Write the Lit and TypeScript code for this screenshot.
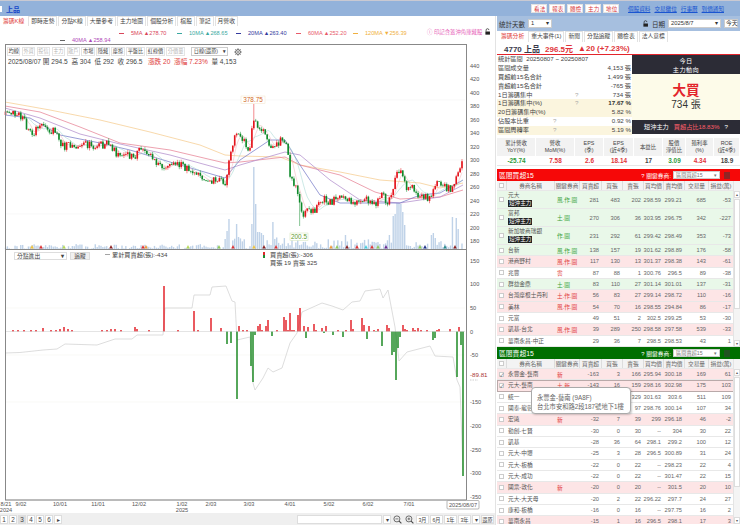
import { LitElement, html, svg, css } from 'lit';
import { customElement, property } from 'lit/decorators.js';

type Pt = [number, number];

// price path read off the chart, screen coords
const PRICE: Pt[] = [[5, 115], [13, 113], [23, 116], [27, 128], [33, 133], [41, 125], [50, 130], [56, 131], [60, 146], [75, 146], [80, 143], [90, 145], [100, 146], [107, 143], [118, 155], [125, 153], [135, 157], [140, 150], [150, 152], [157, 165], [165, 165], [180, 165], [192, 170], [200, 175], [212, 180], [224, 181], [226, 188], [228, 160], [232, 146], [238, 131], [243, 140], [247, 146], [250, 150], [253, 118], [258, 125], [265, 135], [272, 150], [280, 140], [287, 148], [290, 175], [296, 190], [302, 217], [307, 207], [315, 212], [323, 198], [330, 202], [345, 197], [352, 205], [367, 200], [377, 203], [383, 193], [388, 205], [395, 180], [400, 168], [403, 180], [407, 190], [413, 188], [418, 197], [430, 197], [437, 182], [447, 188], [453, 190], [457, 173], [460, 170], [462, 163]];

const MA120: Pt[] = [[5, 102], [50, 110], [100, 120], [150, 132], [200, 145], [225, 155], [240, 156], [280, 157], [300, 165], [340, 172], [380, 180], [420, 183], [440, 188], [463, 183]];
const MA60: Pt[] = [[5, 106], [40, 112], [80, 127], [120, 143], [170, 150], [225, 163], [240, 162], [285, 157], [300, 165], [340, 175], [375, 192], [400, 199], [440, 197], [463, 190]];
const MA40: Pt[] = [[5, 108], [40, 118], [80, 134], [120, 144], [170, 155], [225, 170], [240, 165], [285, 152], [300, 155], [330, 180], [360, 200], [400, 203], [440, 197], [463, 185]];
const MA20: Pt[] = [[5, 115], [30, 118], [60, 135], [100, 143], [130, 150], [170, 162], [225, 178], [240, 160], [270, 140], [285, 140], [300, 165], [320, 195], [340, 203], [400, 203], [420, 195], [440, 193], [463, 180]];

const NET_LINE: Pt[] = [[5, 353], [20, 352.5], [43, 350], [57, 349], [65, 344], [97, 345], [115, 339], [132, 339], [137, 335], [163, 335], [165, 308], [192, 308], [194, 295], [210, 295], [212, 287], [226, 286], [232, 301], [235, 302], [237, 340], [250, 337], [253, 383], [255, 390], [263, 378], [268, 368], [273, 372], [282, 368], [290, 343], [297, 333], [302, 312], [322, 303], [332, 306], [343, 310], [352, 302], [360, 301], [365, 291], [380, 289], [383, 298], [388, 290], [395, 327], [399, 361], [407, 352], [430, 346], [435, 356], [453, 357], [457, 380], [460, 387], [463, 470]];

// x, top of bar
const NET_BARS: Pt[] = [[13, 330], [18, 330], [24, 330], [31, 330], [36, 330], [43, 328], [51, 330], [56, 330], [60, 329], [64, 327], [68, 329], [72, 330], [102, 330], [107, 330], [111, 329], [115, 329], [121, 330], [135, 327], [137, 329], [149, 330], [164, 286], [178, 330], [194, 311], [198, 330], [211, 318], [221, 328], [227, 344], [231, 343], [237, 399], [239, 326], [243, 330], [247, 330], [251, 366], [253, 382], [255, 335], [258, 326], [260, 324], [262, 330], [266, 326], [268, 320], [272, 336], [277, 330], [284, 317], [286, 320], [288, 330], [290, 313], [292, 330], [294, 330], [298, 315], [300, 308], [304, 326], [306, 338], [308, 327], [314, 324], [316, 330], [322, 328], [324, 333], [326, 326], [333, 335], [338, 330], [343, 337], [346, 330], [351, 320], [353, 329], [362, 318], [364, 325], [367, 339], [369, 326], [374, 330], [376, 332], [378, 329], [382, 346], [387, 325], [389, 328], [392, 355], [394, 352], [396, 380], [398, 348], [400, 337], [403, 325], [405, 329], [407, 330], [413, 328], [415, 330], [418, 328], [421, 330], [427, 330], [433, 340], [435, 338], [437, 330], [439, 329], [450, 329], [457, 377], [459, 327], [461, 345], [463, 476]];

const VOL_SPIKES: Pt[] = [[226, 10], [227, 18], [229, 30], [237, 25], [238, 12], [251, 25], [253, 82], [255, 45], [257, 17], [259, 17], [261, 16], [263, 14], [272, 27], [345, 14], [390, 14], [394, 33], [396, 35], [398, 46], [400, 45], [402, 37], [404, 24], [431, 14], [433, 16], [436, 11], [453, 32], [456, 31], [458, 20], [463, 43]];

const MARKERS: [number, string][] = [[32, '#f2c33c'], [41, '#d33'], [64, '#b7d95a'], [111, '#8c2020'], [143, '#d33'], [146, '#ef9a3c'], [188, '#b7d95a'], [219, '#8fc85a'], [233, '#d33'], [254, '#f2c33c'], [264, '#8c2020'], [276, '#d33'], [331, '#ef9a3c'], [337, '#8fc85a'], [347, '#8c2020'], [357, '#d33'], [366, '#44ccdd'], [372, '#d33'], [378, '#8fc85a'], [386, '#6a2c91'], [420, '#8fc85a'], [425, '#223388'], [445, '#2a8a8a'], [455, '#8c2020']];

const DATES: [number, string, string?][] = [[6, '8/21', '2024'], [21, '9/02'], [60, '10/01'], [98, '11/01'], [139, '12/02'], [182, '1/02', '2025'], [211, '2/03'], [249, '3/03'], [290, '4/01'], [329, '5/02'], [368, '6/02'], [409, '7/01']];

function interp(keys: Pt[], x: number) {
  for (let i = 1; i < keys.length; i++) {
    if (x <= keys[i][0]) {
      const [x0, y0] = keys[i - 1];
      const [x1, y1] = keys[i];
      return y0 + ((y1 - y0) * (x - x0)) / (x1 - x0);
    }
  }
  return keys[keys.length - 1][1];
}

function seeded(seed: number) {
  return () => {
    seed = (seed * 1664525 + 1013904223) % 4294967296;
    return seed / 4294967296;
  };
}

function toPath(pts: Pt[]) {
  return 'M' + pts.map((p) => `${p[0].toFixed(1)} ${p[1].toFixed(1)}`).join('L');
}

@customElement('kline-chart')
export class KlineChart extends LitElement {
  static styles = css`
    :host {
      display: block;
    }
    svg {
      display: block;
      width: 495px;
      height: 448px;
      overflow: visible;
    }
    text {
      font-family: "Liberation Sans", "Noto Sans CJK TC", sans-serif;
      font-size: 5.6px;
      fill: #555;
    }
    .label {
      font-size: 6.2px;
      fill: #444;
    }
    .peak {
      font-size: 6.4px;
      fill: #d2691e;
    }
    .low {
      font-size: 6.4px;
      fill: #5c9a2c;
    }
    .cross {
      font-size: 6.2px;
      fill: #a33;
    }
  `;

  private series() {
    const rand = seeded(4770);
    const out: { x: number; o: number; c: number; h: number; l: number }[] = [];
    let prev = 115;
    for (let i = 0; i < 240; i++) {
      const x = 5.5 + i * 1.91;
      const c = interp(PRICE, x) + (rand() - 0.5) * 8;
      let h = Math.min(prev, c) - rand() * 2.5;
      let l = Math.max(prev, c) + rand() * 2.5;
      // long wicks at the 378.75 high and the 200.5 low
      if (Math.abs(x - 253) < 1) h = 104;
      if (Math.abs(x - 299) < 1) l = 226;
      out.push({ x, o: prev, c, h, l });
      prev = c;
    }
    return out;
  }

  private candles(data: ReturnType<KlineChart['series']>) {
    return data.map((d) => {
      const up = d.c < d.o;
      const color = up ? '#e4141c' : '#0f8a2a';
      return svg`
        <line x1=${d.x} x2=${d.x} y1=${d.h} y2=${d.l} stroke=${color} stroke-width="0.5"></line>
        <rect x=${d.x - 0.8} y=${Math.min(d.o, d.c)} width="1.6" height=${Math.max(Math.abs(d.o - d.c), 0.7)} fill=${color}></rect>
      `;
    });
  }

  private volumes(data: ReturnType<KlineChart['series']>) {
    const rand = seeded(91);
    return data.map((d) => {
      const spike = VOL_SPIKES.find((s) => Math.abs(s[0] - d.x) < 1);
      const scale = d.x < 222 ? 5 : d.x < 300 ? 12 : d.x < 390 ? 10 : 8;
      const h = spike ? spike[1] : rand() * scale;
      return svg`<rect x=${d.x - 0.7} y=${249 - h} width="1.4" height=${h} fill="#bfd2e8"></rect>`;
    });
  }

  private movingAvg(data: ReturnType<KlineChart['series']>, n: number): Pt[] {
    return data.map((d, i) => {
      const from = Math.max(0, i - n + 1);
      const part = data.slice(from, i + 1);
      return [d.x, part.reduce((s, p) => s + p.c, 0) / part.length] as Pt;
    });
  }

  render() {
    const data = this.series();
    const priceTicks = [440, 420, 400, 380, 360, 340, 320, 300, 280, 260, 240, 220, 200, 180];
    const netTicks = [100, 50, 0, -50, -150, -200, -250, -300, -350];
    return html`
      <svg viewBox="0 65 495 448">
        ${[100, 160, 214].map((y) => svg`<line x1="6" x2="465" y1=${y} y2=${y} stroke="#f3f3f3" stroke-width="0.6"></line>`)}
        ${[308, 355, 402].map((y) => svg`<line x1="6" x2="465" y1=${y} y2=${y} stroke="#f5f5f0" stroke-width="0.6"></line>`)}

        ${this.volumes(data)}
        ${MARKERS.map(([x, c]) => svg`<polygon points="${x - 1.8},248.5 ${x + 1.8},248.5 ${x},245" fill=${c}></polygon>`)}

        <path d=${toPath(MA120)} fill="none" stroke="#f6cf97" stroke-width="0.8"></path>
        <path d=${toPath(MA60)} fill="none" stroke="#e98a9c" stroke-width="0.8"></path>
        <path d=${toPath(MA40)} fill="none" stroke="#b694cf" stroke-width="0.8"></path>
        <path d=${toPath(MA20)} fill="none" stroke="#6f73c4" stroke-width="0.7"></path>
        <path d=${toPath(this.movingAvg(data, 10))} fill="none" stroke="#9ad3cc" stroke-width="0.5"></path>
        <path d=${toPath(this.movingAvg(data, 5))} fill="none" stroke="#eeb0b4" stroke-width="0.5"></path>
        ${this.candles(data)}

        <rect x="241" y="96" width="24" height="7.5" fill="#fff" stroke="#f3e2c8" stroke-width="0.5"></rect>
        <text class="peak" x="253" y="102" text-anchor="middle">378.75</text>
        <rect x="290" y="233" width="18" height="7.5" fill="#fff" stroke="#cfe3b5" stroke-width="0.5"></rect>
        <text class="low" x="299" y="239" text-anchor="middle">200.5</text>

        <line x1="5" x2="466" y1="249.5" y2="249.5" stroke="#888" stroke-width="1"></line>

        <path d=${toPath(NET_LINE)} fill="none" stroke="#d4d4d4" stroke-width="0.8"></path>
        ${NET_BARS.map(([x, top]) => {
          const up = top < 331.5;
          return svg`<rect x=${x - 0.75} y=${up ? top : 331.5} width="1.5" height=${Math.abs(top - 331.5)} fill=${up ? '#e4242c' : '#1f8a26'}></rect>`;
        })}
        <line x1="6" x2="465" y1="331.5" y2="331.5" stroke="#bbb" stroke-width="0.4"></line>

        <line x1="105" x2="110" y1="254.5" y2="254.5" stroke="#666" stroke-width="0.6"></line>
        <text class="label" x="112" y="256.5">累計買賣超(張):-434</text>
        <rect x="263" y="252" width="2" height="3" fill="#e0282c"></rect>
        <rect x="263" y="255" width="2" height="3" fill="#1d8a30"></rect>
        <text class="label" x="270" y="256.5">買賣超(張):-306</text>
        <text class="label" x="270" y="264.5">買張 19 賣張 325</text>

        ${priceTicks.map((p) => svg`<text x="470" y=${66 + (440 - p) * 0.6735 + 2}>${p}</text>`)}
        <text x="470" y="262.5">150</text>
        ${netTicks.map((v) => svg`<text x="470" y=${331.5 - v * 0.472 + 2}>${v}</text>`)}
        <text class="cross" x="470" y="377">-89.81</text>
        <line x1="470" x2="478" y1="380" y2="380" stroke="#999" stroke-width="0.5" stroke-dasharray="1.5 1"></line>

        <line x1="5" x2="466" y1="500" y2="500" stroke="#777" stroke-width="1"></line>
        ${DATES.map(([x, d, year]) => svg`
          <text x=${x} y="505.5" text-anchor="middle">${d}</text>
          ${year ? svg`<text x=${x} y="511.5" text-anchor="middle">${year}</text>` : ''}
        `)}
        <rect x="447" y="500.5" width="32" height="8.5" rx="1" fill="#fff" stroke="#888" stroke-width="0.6"></rect>
        <text x="463" y="507" text-anchor="middle">2025/08/07</text>
      </svg>
    `;
  }
}

type Row = {
  name: string;
  badge?: boolean;
  tag?: string;
  tone?: 'g' | 'p' | '';
  nums: (number | string)[];
  checked?: boolean;
};

@customElement('broker-table')
export class BrokerTable extends LitElement {
  @property({ attribute: false }) rows: Row[] = [];
  @property({ type: Number }) selected = -1;

  static styles = css`
    :host {
      display: block;
      position: relative;
      overflow: hidden;
      font-family: "Liberation Sans", "Noto Sans CJK TC", sans-serif;
      font-size: 5.7px;
      color: #666;
    }
    .row {
      display: grid;
      grid-template-columns: 9px 48px 25px 22px 21px 21px 20px 21px 24px 25px;
      border-bottom: 1px solid #e8e8e8;
      min-height: 11.33px;
      align-items: center;
      box-sizing: border-box;
    }
    .head {
      background: #f3f3f3;
      min-height: 10px;
      text-align: center;
    }
    .head > span {
      border-left: 1px solid #ddd;
    }
    .g {
      background: #e9f8e9;
    }
    .p {
      background: #fde5e6;
    }
    .sel {
      outline: 1px solid #b9a9a9;
      outline-offset: -1px;
    }
    .cell-name {
      padding-left: 2px;
      line-height: 8.5px;
      color: #555;
      white-space: nowrap;
    }
    .num {
      text-align: right;
      padding-right: 2px;
    }
    .badge {
      display: block;
      width: max-content;
      background: #222;
      color: #fff;
      padding: 0 1px;
      font-size: 5.6px;
      line-height: 7.5px;
      margin-bottom: 1px;
    }
    .tag {
      padding-left: 3px;
      color: #e03a3a;
    }
    .tag.g-tag {
      color: #3aa23a;
    }
    .box {
      width: 5px;
      height: 5px;
      margin-left: 2px;
      border: 1px solid #ccc;
      background: #fff;
      box-sizing: border-box;
      font-size: 5px;
      line-height: 4px;
      color: #444;
    }
    .scroll {
      position: absolute;
      top: 0;
      right: 0;
      bottom: 0;
      width: 6px;
      background: #f4f4f4;
      border-left: 1px solid #e4e4e4;
    }
    .scroll::before {
      content: '';
      position: absolute;
      left: 0;
      right: 0;
      top: 18px;
      height: 110px;
      background: #fff;
      border: 1px solid #ddd;
      box-sizing: border-box;
    }
    .arrow {
      position: absolute;
      left: 0;
      right: 0;
      height: 7px;
      background: #fff;
      border: 1px solid #ddd;
      box-sizing: border-box;
      font-size: 4px;
      line-height: 5px;
      text-align: center;
      color: #555;
    }
    .arrow.up {
      top: 10px;
    }
    .arrow.down {
      bottom: 0;
    }
  `;

  render() {
    const heads = ['券商名稱', '關鍵券商', '買賣超', '買張', '賣張', '買均價', '賣均價', '交易量', '損益(萬)'];
    return html`
      <div class="row head">
        <div class="box"></div>
        ${heads.map((h) => html`<span>${h}</span>`)}
      </div>
      ${this.rows.map(
        (r, i) => html`
          <div class="row ${r.tone ?? ''} ${i === this.selected ? 'sel' : ''}">
            <div class="box">${r.checked ? '✓' : ''}</div>
            <div class="cell-name">
              ${r.name}${r.badge ? html`<span class="badge">短沖主力</span>` : ''}
            </div>
            <div class="tag ${r.tone === 'g' ? 'g-tag' : ''}">${r.tag ?? ''}</div>
            ${r.nums.map((n) => html`<div class="num">${n}</div>`)}
          </div>
        `
      )}
      <div class="scroll">
        <div class="arrow up">▴</div>
        <div class="arrow down">▾</div>
      </div>
    `;
  }
}

const BUY_ROWS: Row[] = [
  { name: '元大', badge: true, tag: '風.作.圖', tone: 'g', nums: [281, 483, 202, 298.59, 299.21, 685, -53] },
  { name: '富邦', badge: true, tag: '土.圖', tone: 'g', nums: [270, 306, 36, 303.95, 296.75, 342, -227] },
  { name: '新加坡商瑞銀', badge: true, tag: '作.圖', tone: 'g', nums: [231, 292, 61, 299.42, 298.49, 353, -73] },
  { name: '台新', tag: '風.作.圖', tone: 'g', nums: [138, 157, 19, 301.62, 298.89, 176, -58] },
  { name: '港商野村', tag: '風.作.圖', tone: 'p', nums: [117, 130, 13, 301.37, 298.38, 143, -61] },
  { name: '兆豐', tag: '雲', tone: '', nums: [87, 88, 1, 300.76, 296.5, 89, -38] },
  { name: '群益金鼎', tag: '土.圖', tone: 'g', nums: [83, 110, 27, 301.14, 301.01, 137, -31] },
  { name: '台灣摩根士丹利', tag: '土.作.圖', tone: 'p', nums: [56, 83, 27, 299.14, 298.72, 110, -16] },
  { name: '美林', tag: '風.作.圖', tone: 'p', nums: [54, 70, 16, 298.55, 294.84, 86, -17] },
  { name: '元富', tone: '', nums: [49, 51, 2, 302.5, 299.25, 53, -30] },
  { name: '凱基-台北', tag: '風.作.圖', tone: 'p', nums: [39, 289, 250, 298.58, 297.58, 539, -33] },
  { name: '華南永昌-中正', tone: '', nums: [29, 36, 7, 298.5, 298.53, 43, 1] },
];

const SELL_ROWS: Row[] = [
  { name: '永豐金-藝南', tag: '新', tone: 'p', checked: true, nums: [-163, 3, 166, 295.94, 300.18, 169, 61] },
  { name: '元大-藝南', tag: '土.新', tone: 'p', checked: true, nums: [-143, 16, 159, 298.16, 302.98, 175, 103] },
  { name: '統一', tone: '', nums: [-147, 182, 329, 301.63, 303.6, 511, 109] },
  { name: '國泰-龍彰', tone: '', nums: [-87, 10, 97, 298.76, 300.14, 107, 34] },
  { name: '宏遠', tag: '新', tone: 'p', nums: [-32, 7, 39, 299, 296.18, 46, -2] },
  { name: '勤創-七賢', tone: '', nums: [-30, 0, 30, '--', 304, 30, 22] },
  { name: '凱基', tone: '', nums: [-28, 36, 64, 298.1, 299.2, 100, 12] },
  { name: '元大-中壢', tone: '', nums: [-25, 3, 28, 296.5, 300.89, 31, 24] },
  { name: '元大-板橋', tone: '', nums: [-22, 0, 22, '--', 298.23, 22, 4] },
  { name: '元大-成功', tone: '', nums: [-22, 0, 22, '--', 301.47, 22, 15] },
  { name: '國票-敦化', tag: '新', tone: 'p', nums: [-20, 0, 20, '--', 301.5, 20, 10] },
  { name: '元大-大天母', tone: '', nums: [-20, 2, 22, 296.22, 297.7, 24, 27] },
  { name: '康和-板橋', tone: '', nums: [-16, 0, 16, '--', 297.75, 16, 2] },
  { name: '華南永昌', tone: 'p', nums: [-15, 1, 16, 296.5, 298.1, 17, 3] },
];

const STATS: { k: string; q?: number; v: string; hi?: boolean; bold?: boolean }[] = [
  { k: '區間成交量', v: '4,153 張' },
  { k: '買超前15名合計', v: '1,499 張' },
  { k: '賣超前15名合計', v: '-765 張' },
  { k: '1日籌碼集中', q: 78, v: '734 張' },
  { k: '1日籌碼集中(%)', q: 78, v: '17.67 %', hi: true, bold: true },
  { k: '20日籌碼集中(%)', v: '5.82 %', hi: true },
  { k: '佔股本比重', q: 56, v: '0.92 %' },
  { k: '區間周轉率', q: 56, v: '5.19 %', hi: true },
];

const METRICS: { k: string[]; v: string; c: string }[] = [
  { k: ['累計營收', 'YoY(%)'], v: '-25.74', c: 'up-g' },
  { k: ['營收', 'MoM(%)'], v: '7.58', c: 'up-r' },
  { k: ['EPS', '(季)'], v: '2.6', c: 'up-r' },
  { k: ['EPS', '(近4季)'], v: '18.14', c: 'up-r' },
  { k: ['本益比'], v: '17', c: '' },
  { k: ['股價', '淨值比'], v: '3.09', c: 'up-g' },
  { k: ['殖利率', '(%)'], v: '4.34', c: 'up-r' },
  { k: ['ROE', '(近4季)'], v: '18.9', c: '' },
];

const lockIcon = svg`<svg class="lock" viewBox="0 0 10 10"><path d="M3 5V3a2 2 0 0 1 4 0" fill="none" stroke="#222" stroke-width="1"></path><rect x="2" y="5" width="6.5" height="4.5" fill="#222"></rect></svg>`;

const gearIcon = svg`<svg class="gear" viewBox="0 0 12 12"><circle cx="6" cy="6" r="3.6" fill="none" stroke="#333" stroke-width="1.1"></circle><circle cx="6" cy="6" r="1.3" fill="none" stroke="#333" stroke-width="0.7"></circle><path d="M6 .6v1.6M6 9.8v1.6M.6 6h1.6M9.8 6h1.6M2.2 2.2l1.1 1.1M8.7 8.7l1.1 1.1M9.8 2.2 8.7 3.3M3.3 8.7 2.2 9.8" stroke="#333" stroke-width="1.2"></path></svg>`;

const zoomIcon = (plus: boolean) => svg`<svg class="zoom" viewBox="0 0 12 12"><circle cx="5.2" cy="5.2" r="4" fill="none" stroke="#444" stroke-width="1"></circle><path d="M8.2 8.2 11.2 11.2" stroke="#444" stroke-width="1.4"></path><path d=${plus ? 'M3.4 5.2h3.6M5.2 3.4v3.6' : 'M3.2 5.2h4'} stroke="#444" stroke-width="0.9"></path></svg>`;

@customElement('app-root')
export class AppRoot extends LitElement {
  static styles = css`
    :host {
      display: block;
      width: 740px;
      height: 525px;
      overflow: hidden;
      background: #fff;
      font-family: "Liberation Sans", "Noto Sans CJK TC", sans-serif;
      font-size: 6.2px;
      color: #444;
    }
    * {
      box-sizing: border-box;
    }
    .topbar {
      height: 16px;
      border-top: 1px solid #c9c9d2;
      background: #93b2da;
      display: flex;
      align-items: center;
      padding: 0 16px 0 0;
    }
    .edge {
      width: 2px;
      height: 6px;
      background: #fff;
      margin-right: 4px;
    }
    .title {
      color: #1546c8;
      font-weight: bold;
      font-size: 7px;
      flex: 1;
    }
    .tools {
      display: flex;
      gap: 2px;
      margin-right: 9px;
    }
    .tools span {
      background: #fff;
      color: #d8383c;
      border: 1px solid #e2e2e2;
      padding: 0 2px;
      height: 9px;
      width: 16px;
      line-height: 8px;
      text-align: center;
      font-size: 5.6px;
      white-space: nowrap;
    }
    .links {
      display: flex;
      gap: 4px;
    }
    .links a {
      color: #1a55d0;
      text-decoration: underline;
      font-size: 5.6px;
    }
    .main {
      display: flex;
      height: 509px;
    }
    .left {
      width: 495px;
      flex: none;
    }
    .right {
      width: 245px;
      flex: none;
      padding-left: 1px;
      border-left: 1px solid #e3e3e3;
    }
    .tabs {
      display: flex;
      gap: 1px;
      height: 10px;
      align-items: stretch;
      font-size: 5.8px;
    }
    .tabs span {
      padding: 0 2px;
      border: 1px solid #e2e2e2;
      border-bottom: 0;
      line-height: 9px;
      white-space: nowrap;
    }
    .tabs span.on {
      border-color: transparent;
      color: #e03a3a;
    }
    .legend {
      height: 18px;
      padding-top: 4px;
      position: relative;
      font-size: 5.6px;
      line-height: 7px;
    }
    .ma-row {
      display: flex;
      padding-left: 119px;
    }
    .ma-row.second {
      padding-left: 60px;
    }
    .ma {
      display: flex;
      align-items: center;
      white-space: nowrap;
    }
    .ma i {
      width: 5px;
      height: 1px;
      margin-right: 7px;
    }
    .note {
      position: absolute;
      top: 2.5px;
      left: 427px;
      color: #e660b8;
      font-size: 5.4px;
      white-space: nowrap;
    }
    .lock {
      width: 7px;
      height: 7px;
      flex: none;
    }
    .legend .lock {
      position: absolute;
      left: 484px;
      top: 2px;
    }
    .frame {
      position: relative;
    }
    .chart-head {
      margin-left: 5px;
      width: 462px;
      height: 21px;
      border: 1px solid #888;
      border-bottom: 0;
      padding: 2px 0 0 1px;
    }
    .btns {
      display: flex;
      gap: 1.5px;
      align-items: center;
      height: 9px;
      font-size: 5.2px;
    }
    .btns span {
      border: 1px solid #e4e4e4;
      padding: 0 0.5px;
      line-height: 7px;
      height: 9px;
      white-space: nowrap;
    }
    .btns span.off {
      color: #b5b5b5;
    }
    .btns .sel-box {
      width: 37px;
      display: flex;
      justify-content: space-between;
      margin-left: 5px;
      background: #fff;
      border-color: #ccc;
      padding: 0 1.5px;
    }
    .gear {
      width: 8px;
      height: 8px;
      margin-left: 4px;
    }
    .info {
      font-size: 6.6px;
      line-height: 9px;
      margin-top: 1px;
      padding-left: 1px;
      color: #444;
      white-space: pre;
    }
    .red {
      color: #e03a3a;
    }
    .sides {
      position: absolute;
      top: 21px;
      left: 5px;
      width: 462px;
      height: 435px;
      border-left: 1px solid #888;
      border-right: 1px solid #888;
      pointer-events: none;
    }
    .net-ctrl {
      position: absolute;
      left: 14px;
      top: 208px;
      display: flex;
      gap: 3px;
      font-size: 5.8px;
    }
    .net-ctrl div {
      height: 8px;
      line-height: 7px;
      border: 1px solid #ddd;
      padding: 0 2px;
    }
    .net-sel {
      width: 53px;
      display: flex;
      justify-content: space-between;
      background: #fff;
    }
    .net-btn {
      width: 20px;
      background: #f0f0f0;
      text-align: center;
    }
    .pager {
      height: 12px;
      background: #efefef;
      display: flex;
      align-items: center;
      gap: 1px;
      font-size: 6.4px;
    }
    .pager span {
      background: #fff;
      border: 1px solid #ddd;
      height: 9px;
      line-height: 8px;
      width: 8px;
      flex: none;
      text-align: center;
      white-space: nowrap;
    }
    .pager span.cur {
      background: #ddd;
    }
    .pager span.wide {
      width: 13px;
      font-size: 5.2px;
    }
    .pager .field {
      width: 85px;
      margin-left: 234px;
    }
    .zoom {
      width: 9px;
      height: 9px;
      margin: 0 1px;
      flex: none;
    }
    .daybar {
      height: 15px;
      background: #a6bfdf;
      display: flex;
      align-items: center;
      padding: 0 2px;
      gap: 3px;
      font-size: 6.5px;
      color: #333;
    }
    .daybar .grow {
      flex: 1;
    }
    .input {
      background: #fff;
      border: 1px solid #ccc;
      height: 9px;
      line-height: 7px;
      font-size: 5.8px;
      padding: 0 2px;
      display: flex;
      justify-content: space-between;
      white-space: nowrap;
    }
    .w-days {
      width: 24px;
    }
    .w-date {
      width: 53px;
    }
    .w-today {
      width: 14px;
      padding: 0 1px;
    }
    .panel-tabs {
      height: 11px;
      padding-left: 1px;
    }
    .quote {
      height: 13px;
      border-bottom: 1.5px solid #e3242b;
      display: flex;
      align-items: center;
      font-size: 8px;
      font-weight: bold;
      padding-left: 7px;
      gap: 5px;
      color: #3a3a4a;
    }
    .quote .red {
      color: #e0343a;
    }
    .summary {
      display: grid;
      grid-template-columns: 135px 108px;
      height: 81px;
    }
    .stat-row {
      height: 8.9px;
      line-height: 8.9px;
      display: flex;
      padding: 0 1px;
      position: relative;
      justify-content: space-between;
      white-space: nowrap;
      font-size: 6.2px;
    }
    .stat-row.hi {
      background: #fbf5de;
    }
    .stat-row b {
      color: #333;
    }
    .q {
      position: absolute;
      color: #aaa;
    }
    .card {
      display: flex;
      flex-direction: column;
      text-align: center;
    }
    .card-head {
      height: 19px;
      background: #2c2c36;
      color: #fff;
      line-height: 9px;
      padding-top: 1px;
      letter-spacing: 0.4px;
    }
    .card-body {
      flex: 1;
      background: #fdfbe9;
      display: flex;
      flex-direction: column;
      justify-content: center;
    }
    .big {
      color: #e3242b;
      font-size: 13.5px;
      font-weight: bold;
      line-height: 16px;
    }
    .lots {
      font-size: 10px;
      line-height: 12px;
      color: #333;
    }
    .card-foot {
      height: 14px;
      margin-bottom: 2px;
      background: #2c2c36;
      color: #fff;
      line-height: 13px;
      display: flex;
      justify-content: center;
      gap: 5px;
    }
    .card-foot em {
      font-style: normal;
      color: #ff5f6a;
    }
    .metrics {
      display: grid;
      grid-template-columns: 39px 39px 29px 30px 29px 23px 28px 26px;
      margin-top: 2px;
      text-align: center;
      font-size: 5.4px;
    }
    .m-head {
      background: #f2f2f2;
      height: 18px;
      border-right: 1px solid #fff;
      line-height: 7px;
      display: flex;
      flex-direction: column;
      justify-content: center;
    }
    .m-val {
      height: 10px;
      line-height: 10px;
      font-size: 6.4px;
      font-weight: bold;
      border-bottom: 1px solid #e6e6e6;
    }
    .up-r {
      color: #e0343a;
    }
    .up-g {
      color: #2d9a3a;
    }
    .band {
      display: flex;
      align-items: center;
      color: #fff;
      height: 12px;
      padding: 0 2px;
      font-size: 6.8px;
    }
    .band.buy {
      background: #f60808;
      margin-top: 3px;
    }
    .band.sell {
      background: #006f00;
    }
    .band .grow {
      flex: 1;
    }
    .band small {
      font-size: 5.8px;
      margin-right: 2px;
    }
    .band .input {
      width: 47px;
      height: 8px;
      line-height: 6px;
      font-size: 5.2px;
      color: #777;
      margin-right: 4px;
    }
    .band i {
      width: 6px;
      height: 7px;
      margin-right: 8px;
      background: rgba(60, 60, 60, 0.55);
    }
    .buy-table {
      height: 166px;
    }
    .sell-table {
      height: 165px;
    }
    .tip-host {
      position: relative;
    }
    .tip {
      position: absolute;
      left: 34px;
      top: 28px;
      width: 100px;
      height: 27px;
      padding: 5px 0 0 5px;
      background: #fff;
      border: 1px solid #aaa;
      border-radius: 4px;
      box-shadow: 1px 1px 2px rgba(0, 0, 0, 0.2);
      font-size: 6.3px;
      line-height: 9px;
      color: #666;
      white-space: nowrap;
    }
  `;

  render() {
    const tabs = ['籌碼K線', '即時走勢', '分點K線', '大量參考', '主力地圖', '個股分析', '檔股', '筆記', '月營收'];
    const tools = ['均線', '外資', '投信', '主力', '散戶', '市場', '隱藏', '摩擦', '平盤比', '紅綠價', '分價量'];
    const offTools = new Set(['外資', '投信', '主力', '散戶', '分價量']);
    const panelTabs = ['籌碼分析', '重大事件(1)', '新聞', '分點追蹤', '體檢表', '法人意標'];
    return html`
      <div class="topbar">
        <div class="edge"></div>
        <div class="title">上品</div>
        <div class="tools">
          ${['看法', '報表', '體檢', '主力', '地位'].map((t) => html`<span>${t}</span>`)}
        </div>
        <div class="links">
          ${['個股資料', '交易攤位', '行事曆', '到價通知'].map((t) => html`<a>${t}</a>`)}
        </div>
      </div>
      <div class="main">
        <div class="left">
          <div class="tabs">
            ${tabs.map((t, i) => html`<span class=${i === 0 ? 'on' : ''}>${t}</span>`)}
          </div>
          <div class="legend">
            <div class="ma-row">
              ${this.ma('5MA ▲278.70', '#d9465a', '#d9465a', 58)}
              ${this.ma('10MA ▲268.65', '#3aa8a0', '#3aa8a0', 59)}
              ${this.ma('20MA ▲263.40', '#343a9e', '#343a9e', 60)}
              ${this.ma('60MA ▲252.20', '#e85a6a', '#e85a6a', 57)}
              ${this.ma('120MA ▼256.39', '#f0b040', '#f0b040', 60)}
            </div>
            <div class="ma-row second">${this.ma('40MA ▲258.94', '#666', '#b04ab8', 60)}</div>
            <div class="note">ⓘ 印記含蓋沖角庫藏股</div>
            ${lockIcon}
          </div>
          <div class="frame">
            <div class="chart-head">
              <div class="btns">
                ${tools.map((t) => html`<span class=${offTools.has(t) ? 'off' : ''}>${t}</span>`)}
                <span class="sel-box">日線(還原)<b>▾</b></span>
                ${gearIcon}
              </div>
              <div class="info">2025/08/07 開 294.5  高 304  低 292  收 296.5   <span class="red">漲跌 20  漲幅 7.23%</span>  量 4,153</div>
            </div>
            <kline-chart></kline-chart>
            <div class="sides"></div>
            <div class="net-ctrl">
              <div class="net-sel">分點進出<b>▾</b></div>
              <div class="net-btn">追蹤</div>
            </div>
          </div>
          <div class="pager">
            ${['1', '2', '3', '4', '5', '6', '▸'].map((p) => html`<span class=${p === '3' ? 'cur' : ''}>${p}</span>`)}
            <span class="field"></span>
            <span>▾</span>
            ${zoomIcon(false)}${zoomIcon(true)}
            ${['3月', '6月', '1年', '3年'].map((p) => html`<span class="wide">${p}</span>`)}
            <span>▾</span>
            <span class="wide">還原</span>
          </div>
        </div>
        <div class="right">
          <div class="daybar">
            統計天數
            <div class="input w-days">1<span>▾</span></div>
            <div class="grow"></div>
            ${lockIcon}日期
            <div class="input w-date">2025/8/7<span>▾</span></div>
            <div class="input w-today">今天</div>
          </div>
          <div class="tabs panel-tabs">
            ${panelTabs.map((t, i) => html`<span class=${i === 0 ? 'on' : ''}>${t}</span>`)}
          </div>
          <div class="quote">
            4770 上品 <span class="red">296.5元</span> <span class="red">▲20 (+7.23%)</span>
          </div>
          <div class="summary">
            <div>
              <div class="stat-row"><span>統計區間 &nbsp;20250807 ~ 20250807</span></div>
              ${STATS.map(
                (s) => html`
                  <div class="stat-row ${s.hi ? 'hi' : ''}">
                    <span>${s.k}</span>
                    ${s.q ? html`<span class="q" style="left:${s.q}px">?</span>` : ''}
                    ${s.bold ? html`<b>${s.v}</b>` : html`<span>${s.v}</span>`}
                  </div>
                `
              )}
            </div>
            <div class="card">
              <div class="card-head">今日<br />主力動向</div>
              <div class="card-body">
                <div class="big">大買</div>
                <div class="lots">734 張</div>
              </div>
              <div class="card-foot">短沖主力 <em>買超占比18.83%</em> ?</div>
            </div>
          </div>
          <div class="metrics">
            ${METRICS.map((m) => html`<div class="m-head">${m.k.map((l) => html`<span>${l}</span>`)}</div>`)}
            ${METRICS.map((m) => html`<div class="m-val ${m.c}">${m.v}</div>`)}
          </div>
          ${this.band('區間買超15', 'buy')}
          <broker-table class="buy-table" .rows=${BUY_ROWS}></broker-table>
          ${this.band('區間賣超15', 'sell')}
          <div class="tip-host">
            <broker-table class="sell-table" .rows=${SELL_ROWS} .selected=${1}></broker-table>
            <div class="tip">永豐金-藝南 (9A8F)<br />台北市安和路2段187號地下1樓</div>
          </div>
        </div>
      </div>
    `;
  }

  private band(title: string, kind: string) {
    return html`
      <div class="band ${kind}">
        ${title}
        <div class="grow"></div>
        <small>? 關鍵券商:</small>
        <div class="input">${title}<span>▾</span></div>
        <i></i>
      </div>
    `;
  }

  private ma(label: string, dash: string, color: string, width: number) {
    return html`
      <div class="ma" style="width:${width}px;color:${color}">
        <i style="background:${dash}"></i>${label}
      </div>
    `;
  }
}
